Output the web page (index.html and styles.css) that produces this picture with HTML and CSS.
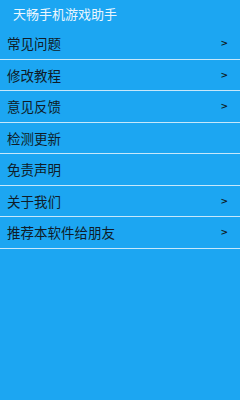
FILE: index.html
```html
<!DOCTYPE html>
<html lang="zh-CN">
<head>
	<meta charset="utf-8">
	<meta name="viewport" content="width=device-width, initial-scale=1">
	<title>天畅手机游戏助手</title>
	<link rel="stylesheet" href="styles.css">
</head>
<body>
<div class="title">天畅手机游戏助手</div>
<ul class="menu">
	<li class="item more"><span>常见问题</span><span class="arrow">&gt;</span></li>
	<li class="item more"><span>修改教程</span><span class="arrow">&gt;</span></li>
	<li class="item more"><span>意见反馈</span><span class="arrow">&gt;</span></li>
	<li class="item"><span>检测更新</span></li>
	<li class="item"><span>免责声明</span></li>
	<li class="item more"><span>关于我们</span><span class="arrow">&gt;</span></li>
	<li class="item more"><span>推荐本软件给朋友</span><span class="arrow">&gt;</span></li>
</ul>
</body>
</html>
```

FILE: styles.css
```css
html,body
{
	padding: 0;
	border: 0;
	margin: 0;
}

body
{
	min-height: 400px;
	background: #1ca6f2;
	font-family: "Noto Sans CJK SC", "Liberation Sans", sans-serif;
}

.title
{
	height: 28px;
	padding-left: 13px;
	color: #eaf6fe;
	font-size: 13px;
	line-height: 28px;
}

.menu
{
	padding: 0;
	margin: 0;
	list-style: none;
}

/* divider is 1.5px, drawn as a gradient so it is not rounded down */
.item
{
	display: flex;
	box-sizing: border-box;
	height: 31.5px;
	align-items: center;
	justify-content: space-between;
	padding: 0 12px 1.5px 7px;
	background: linear-gradient(to top, #c6e8fb 1.5px, transparent 1.5px);
	color: #0f1c28;
	font-size: 13.5px;
}

.arrow
{
	font-family: "DejaVu Sans", sans-serif;
	font-size: 9px;
	font-weight: bold;
}
```
